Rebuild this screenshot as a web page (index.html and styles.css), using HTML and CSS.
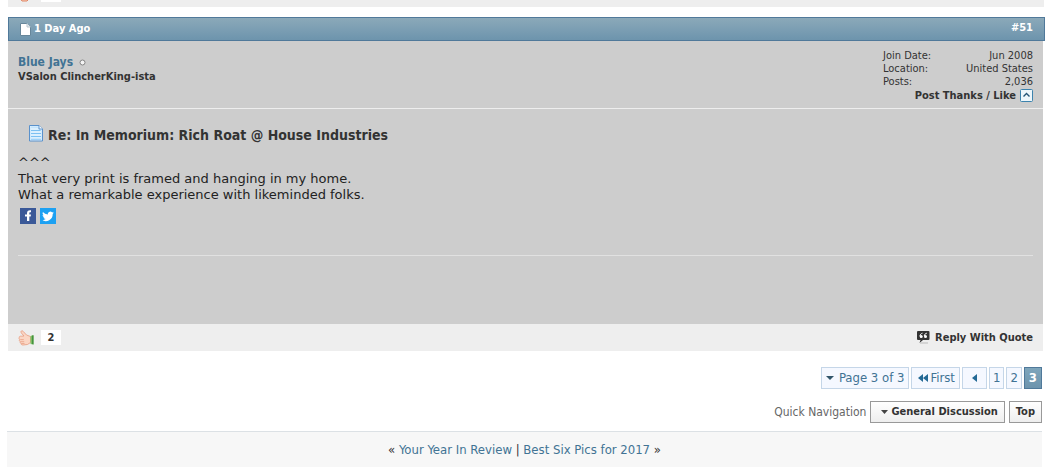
FILE: index.html
```html
<!DOCTYPE html>
<html lang="en">
<head>
<meta charset="utf-8">
<title>In Memorium: Rich Roat @ House Industries</title>
<link rel="stylesheet" href="styles.css">
</head>
<body>
<div class="previous-foot">
  <svg class="thumb" width="17" height="17" viewBox="0 0 17 17" aria-hidden="true"><path d="M1 8 5 6V2l2 0 1 4h4v7l-3 3H4L1 12z" fill="#f9cdb8" stroke="#df8565"/><path d="M12 7h3v7h-3z" fill="#5eae50"/></svg>
  <span class="count"></span>
</div>
<article class="post">
  <header class="post-head">
    <span class="post-date">
      <svg width="11" height="13" viewBox="0 0 11 13" aria-hidden="true"><path d="M.5.5h6.500l3.500 3.500v8.500h-10z" fill="#fff" stroke="#66869a"/><path d="M7 .5V4h3.500" fill="#e8edf0" stroke="#b9c7d0"/></svg>
      1 Day Ago
    </span>
    <a class="post-number" href="#51">#51</a>
  </header>
  <section class="user">
    <div>
      <div class="user-name"><a href="#user">Blue Jays</a>
        <svg width="7" height="7" viewBox="0 0 7 7" aria-hidden="true"><circle cx="3.500" cy="3.500" r="2.500" fill="#f4f4f4" stroke="#858585"/></svg>
      </div>
      <div class="user-title">VSalon ClincherKing-ista</div>
    </div>
    <div class="stats">
      <dl>
        <dt>Join Date:</dt><dd>Jun 2008</dd>
        <dt>Location:</dt><dd>United States</dd>
        <dt>Posts:</dt><dd>2,036</dd>
      </dl>
      <div class="thanks">Post Thanks / Like
        <button type="button" aria-label="Collapse thanks"><svg width="13" height="13" viewBox="0 0 13 13" aria-hidden="true"><rect x=".5" y=".5" width="12" height="12" rx="1" fill="#edf6fb" stroke="#3d83ad"/><path d="M3.500 7.500l3-3 3 3" fill="none" stroke="#235476" stroke-width="1.400"/></svg></button>
      </div>
    </div>
  </section>
  <section class="message">
    <h2>
      <svg width="16" height="17" viewBox="0 0 16 17" aria-hidden="true"><path d="M1.500.5h9.500l3.500 3.500v12h-13z" fill="#dff1fe" stroke="#5a91cb"/><path d="M2.500 1.500h8v3h3V15h-11z" fill="#c4e5fd"/><path d="M3 5.500h9.500M3 8.500h10M3 11.500h10M3 14h10" stroke="#7cc0f2"/><path d="M3 4h7M3 7h10M3 10h10M3 13h10" stroke="#f3faff"/><path d="M11 .5V4h3.500" fill="#fff" stroke="#5a91cb"/></svg>
      <span>Re: In Memorium: Rich Roat @ House Industries</span>
    </h2>
    <p>^^^<br>That very print is framed and hanging in my home.<br>What a remarkable experience with likeminded folks.</p>
    <div class="share">
      <a href="#facebook" aria-label="Share on Facebook"><svg width="16" height="16" viewBox="0 0 16 16"><path fill="#3b5998" d="M0 0h16v16H0z"/><path fill="#fff" d="M7 13V8.500H5v-2h2V5.200C7 3.200 8 2.200 10 2.200h1v2h-.7c-.8 0-1 .4-1 1.100v1.200H11l-.3 2H9.300V13z"/></svg></a>
      <a href="#twitter" aria-label="Share on Twitter"><svg width="16" height="16" viewBox="0 0 16 16"><path fill="#1da1f2" d="M0 0h16v16H0z"/><path fill="#fff" d="M13.800 4.600c-.4.200-.9.300-1.400.4.500-.3.900-.8 1.100-1.300-.5.300-1 .5-1.500.6A2.500 2.500 0 0 0 7.800 6.500 6.800 6.800 0 0 1 2.900 4a2.500 2.500 0 0 0 .7 3.200c-.4 0-.8-.1-1.100-.3 0 1.200.9 2.200 2 2.400-.4.100-.7.100-1.100 0 .3 1 1.200 1.700 2.300 1.700A5 5 0 0 1 2 12.100 7 7 0 0 0 12.700 6c.4-.4.800-.9 1.100-1.400z"/></svg></a>
    </div>
    <hr>
  </section>
  <footer class="post-foot">
    <span class="likes">
      <button type="button" aria-label="Like"><svg class="thumb" width="17" height="17" viewBox="0 0 17 17" aria-hidden="true"><path d="M1.200 8.500C1 7.500 2.200 7 3.300 7.200L6 7 3.200 3.800C2.300 2 4.100 1 5.200 2.400L8.500 6l4 1.500v6L9.500 15.500l-4.500.5c-1.500 0-2-.6-1.700-1.500-1-.2-1.400-.8-1-1.800-1-.5-1.200-1.300-.6-2-.7-.6-.8-1.300-.5-2.200z" fill="#fbd6c4" stroke="#e79b7e" stroke-width=".8"/><path d="M2.300 10.600h3.500M2.600 12.700h3.600M3.500 14.500h3" stroke="#e79b7e" stroke-width=".7"/><path d="M12.500 7c1-.2 2-.5 3-1v9.500l-3-.5z" fill="#79bd63"/><path d="M14 6.500h1.500V15.500l-1.500-.5z" fill="#45913f"/></svg></button>
      <span class="count">2</span>
    </span>
    <a class="reply" href="#reply"><svg width="15" height="13" viewBox="0 0 15 13" aria-hidden="true"><path d="M2 0h10.500q1 0 1 1v7q0 1-1 1H7l-3.500 3 1-3H2Q1 9 1 8V1q0-1 1-1z" fill="#333"/><path d="M6.500 2.200C5 2.600 4 3.500 4 5M10.800 2.200C9.300 2.600 8.300 3.500 8.300 5" fill="none" stroke="#fff"/><circle cx="5.200" cy="5.400" r="1.500" fill="#fff"/><circle cx="9.500" cy="5.400" r="1.500" fill="#fff"/><path d="M4 12h8" stroke="#bbb"/></svg>Reply With Quote</a>
  </footer>
</article>
<nav class="pages" aria-label="Pagination">
  <button class="page-menu" type="button"><svg width="8" height="4" viewBox="0 0 8 4" aria-hidden="true"><path d="M0 0h8L4 4z" fill="#315469"/></svg>Page 3 of 3</button>
  <a class="first" href="#first"><svg width="10" height="8" viewBox="0 0 10 8" aria-hidden="true"><path d="M5 0v8L0 4zM10 0v8L5 4z" fill="#236995"/></svg>First</a>
  <a class="prev" href="#prev" aria-label="Previous page"><svg width="5" height="8" viewBox="0 0 5 8" aria-hidden="true"><path d="M5 0v8L0 4z" fill="#236995"/></svg></a>
  <a href="#page1">1</a>
  <a href="#page2">2</a>
  <a class="current" href="#page3" aria-current="page">3</a>
</nav>
<div class="quick">
  <span>Quick Navigation</span>
  <button class="forum-menu" type="button"><svg width="7" height="4" viewBox="0 0 7 4" aria-hidden="true"><path d="M0 0h7L3.500 4z" fill="#444"/></svg>General Discussion</button>
  <a href="#top">Top</a>
</div>
<nav class="threads" aria-label="Neighbouring threads">« <a href="#older">Your Year In Review</a> | <a href="#newer">Best Six Pics for 2017</a> »</nav>
</body>
</html>
```
FILE: styles.css
```css
* { box-sizing: border-box; }
body {
  margin: 0;
  padding: 0 2px 0 8px;
  background: #fff;
  color: #333;
  font: 12px/14px "DejaVu Sans Condensed", "DejaVu Sans", sans-serif;
}
a { color: #417394; text-decoration: none; }
button { margin: 0; padding: 0; border: 0; background: none; font: inherit; color: inherit; }
svg { flex: none; display: block; }

.previous-foot {
  display: flex;
  align-items: flex-end;
  gap: 6px;
  height: 7px;
  margin-right: 1px;
  padding: 0 10px 5px;
  background: #eee;
  overflow: hidden;
}
.previous-foot .count { height: 16px; }

.post { margin-top: 10px; }
.post-head {
  display: flex;
  justify-content: space-between;
  padding: 4px 11px;
  border: 1px solid #50799a;
  background: linear-gradient(#8ba9b9, #6d94ad);
  color: #fff;
  font-size: 11px;
  font-weight: bold;
}
.post-date { display: flex; align-items: center; gap: 3px; }
.post-number { color: #fff; line-height: 12px; }

.user {
  display: flex;
  justify-content: space-between;
  margin-right: 2px;
  padding: 8px 10px 5px;
  background: #cdcdcd;
  border-bottom: 1px solid #eee;
}
.user-name {
  display: flex;
  align-items: center;
  gap: 6px;
  padding-top: 6px;
  font-weight: bold;
}
.user-title { font-size: 11px; line-height: 15px; font-weight: bold; }
.stats { width: 150px; font-size: 11px; line-height: 13px; }
.stats dl { display: grid; grid-template-columns: auto auto; margin: 0; }
.stats dd { margin: 0; text-align: right; }
.thanks {
  display: flex;
  justify-content: flex-end;
  gap: 4px;
  line-height: 15px;
  font-weight: bold;
  white-space: nowrap;
}

.message {
  margin-right: 2px;
  padding: 16px 10px 68px;
  background: #cdcdcd;
}
.message h2 {
  display: flex;
  align-items: flex-start;
  gap: 4px;
  margin: 0 10px 10px;
  font-size: 14px;
  line-height: 20px;
}
.message p { margin: 0; color: #222; font: 13px/16px "DejaVu Sans", Verdana, sans-serif; }
.share { display: flex; gap: 4px; padding: 5px 2px 0; }
.message hr { margin: 31px 0 0; border: 0; border-top: 1px solid #e1e1e1; }

.post-foot {
  display: flex;
  justify-content: space-between;
  align-items: center;
  margin-right: 2px;
  padding: 5px 10px;
  background: #eee;
}
.likes { display: flex; align-items: center; gap: 6px; }
.count { width: 20px; background: #fff; text-align: center; font-size: 11px; font-weight: bold; line-height: 15px; }
.reply { display: flex; align-items: center; gap: 4px; color: #333; font-size: 11px; font-weight: bold; }

.pages { display: flex; justify-content: flex-end; gap: 2px; margin: 16px 3px 0; font-size: 13px; }
.pages a, .pages button {
  display: flex;
  align-items: center;
  padding: 3px;
  border: 1px solid #c5d6e8;
  background: #f5f8ff;
  color: #417394;
}
.pages .page-menu { gap: 5px; padding: 3px 4px; }
.pages .first { gap: 2px; padding: 3px 4px 3px 6px; }
.pages .prev { padding: 3px 9px; }
.pages .current { padding: 3px 4px; border-color: #50799a; background: linear-gradient(#7ea5bb, #6d94ad); color: #fff; font-weight: bold; }

.quick { display: flex; justify-content: flex-end; align-items: center; gap: 4px; margin: 12px 3px 8px; color: #666; font-size: 12px; }
.quick button, .quick a {
  display: flex;
  align-items: center;
  gap: 3px;
  padding: 3px 6px;
  border: 1px solid #999;
  background: linear-gradient(#fff, #eee);
  color: #333;
  font-size: 11px;
  font-weight: bold;
}
.quick .forum-menu { padding-left: 10px; }

.threads { margin: 0 3px 0 -1px; padding: 11px 0 10px; border-top: 1px solid #dce1e5; background: #f7f7f7; text-align: center; font-size: 13px; }
```
